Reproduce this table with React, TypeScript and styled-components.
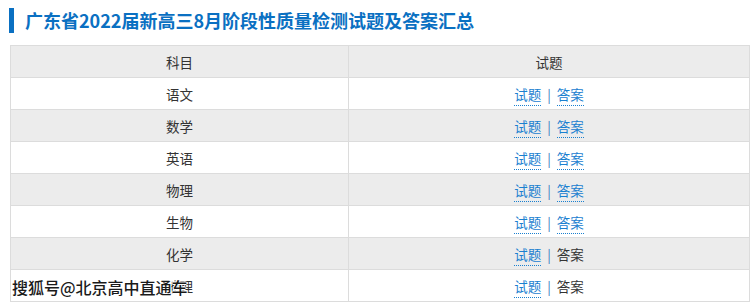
import React from "react";
import styled, { createGlobalStyle } from "styled-components";

const Global = createGlobalStyle`
  html, body { margin: 0; padding: 0; background: #fff; }
  body { font-family: "Noto Sans CJK SC", "Noto Sans", sans-serif; }
`;

const Page = styled.div`
  position: relative;
  width: 755px;
  height: 307px;
  padding: 8px 5px 0 9px;
  box-sizing: border-box;
`;

const Title = styled.h1`
  margin: 0;
  height: 25px;
  line-height: 25px;
  border-left: 5px solid #0a70c2;
  padding-left: 11px;
  font-size: 18px;
  font-weight: 700;
  color: #0a70c2;
  letter-spacing: 0;
`;

const Table = styled.table`
  margin: 12px 0 0 1px;
  width: 740px;
  border-collapse: collapse;
  table-layout: fixed;
  font-size: 13.5px;
  color: #333;
`;

const Row = styled.tr<{ $shade?: boolean }>`
  background: ${(p) => (p.$shade ? "#ececec" : "#fff")};
`;

const Cell = styled.td`
  height: 31px;
  padding: 0;
  border: 1px solid #dcdcdc;
  text-align: center;
  vertical-align: middle;
  line-height: 20px;
`;

const HeadCell = styled(Cell).attrs({ as: "th" })`
  font-weight: 400;
`;

const Link = styled.a`
  color: #1a80d0;
  text-decoration: none;
  border-bottom: 1px dotted #1a80d0;
  padding-bottom: 1px;
`;

const Plain = styled.span`
  color: #333;
`;

const Sep = styled.span`
  color: #3a7fc0;
  margin: 0 6px;
`;

const Watermark = styled.div`
  position: absolute;
  left: 12px;
  top: 275px;
  font-size: 16px;
  color: #1a1a1a;
  font-weight: 500;
  text-shadow: -1px 0 #fff, 1px 0 #fff, 0 -1px #fff, 0 1px #fff;
  pointer-events: none;
`;

const rows: [string, boolean][] = [
  ["语文", true],
  ["数学", true],
  ["英语", true],
  ["物理", true],
  ["生物", true],
  ["化学", false],
  ["地理", false],
];

export default function App() {
  return (
    <>
      <Global />
      <Page>
        <Title>广东省2022届新高三8月阶段性质量检测试题及答案汇总</Title>
        <Table>
          <colgroup>
            <col style={{ width: 338 }} />
            <col />
          </colgroup>
          <thead>
            <Row $shade>
              <HeadCell>科目</HeadCell>
              <HeadCell>试题</HeadCell>
            </Row>
          </thead>
          <tbody>
            {rows.map(([name, answerLink], i) => (
              <Row key={name} $shade={i % 2 === 1}>
                <Cell>{name}</Cell>
                <Cell>
                  <Link href="#">试题</Link>
                  <Sep>|</Sep>
                  {answerLink ? <Link href="#">答案</Link> : <Plain>答案</Plain>}
                </Cell>
              </Row>
            ))}
          </tbody>
        </Table>
        <Watermark>搜狐号@北京高中直通车</Watermark>
      </Page>
    </>
  );
}
